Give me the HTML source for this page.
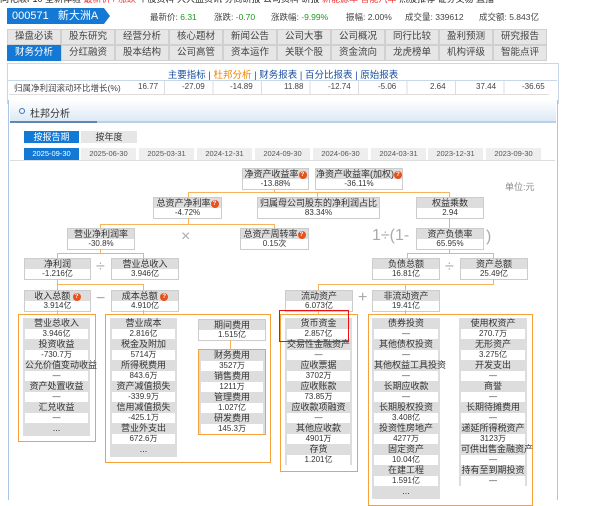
<!DOCTYPE html>
<html><head><meta charset="utf-8"><style>
body{margin:0;width:616px;height:500px;overflow:hidden;background:#fff;font-family:"Liberation Sans","Noto Sans CJK SC",sans-serif;font-size:9px;color:#333;position:relative}
.a{position:absolute}
.nav{position:absolute;height:14px;line-height:14px;width:52px;background:#e6e6e6;border:1px solid #d0d0d0;text-align:center;font-size:9.5px;color:#444}
.nav.on{background:#1479d4;color:#fff;border-color:#1479d4}
.dt{position:absolute;top:148px;height:12px;line-height:12px;width:55px;background:#eee;text-align:center;font-size:7.5px;color:#555}
.n{position:absolute;border:1px solid #ccc;background:#fff;text-align:center;font-size:9px;height:20px}
.n b{display:block;background:#ddd;height:10px;line-height:10px;font-weight:normal;color:#333}
.n i{display:block;height:10px;line-height:10px;font-style:normal;color:#333;font-size:8px}
.q{display:inline-block;width:8px;height:8px;border-radius:50%;background:#e8501c;color:#fff;font-size:6px;line-height:8px;text-align:center;vertical-align:middle;font-weight:bold}
.ob{position:absolute;border:1px solid #f7a13a}
.ol{position:absolute;background:#f7b25a}
.col{position:absolute;background:#ddd;padding:0 2px}
.col div{height:10.5px;line-height:10.5px;text-align:center;font-size:9px;white-space:nowrap}
.col div.v{background:#fff;font-size:8px}
.op{position:absolute;color:#aaa;font-size:16px}
</style></head><body>
<div class="a" style="top:-8px;left:0;white-space:nowrap;font-size:9px;color:#222">同花顺F10 全新体验 <span style="color:#e33">最新价 / 涨跌</span> 个股资料 大大盘资讯 券商研报 公司资料 研报 <span style="color:#e33">新能源车 智能汽车</span> 热股推荐 证券交易 直播</div>
<div class="a" style="left:7px;top:8px;width:97px;height:16px;background:#1479d4;color:#fff;line-height:16px;font-size:11px;padding-left:5px;box-sizing:border-box">000571&nbsp;&nbsp; 新大洲A</div>
<div class="a" style="left:104px;top:8px;width:0;height:0;border-top:8px solid transparent;border-bottom:8px solid transparent;border-left:6px solid #1479d4"></div>
<div class="a" style="top:11px;left:150px;font-size:8.5px;color:#444;white-space:nowrap">最新价: <span style="color:#1a9a1a">6.31</span></div>
<div class="a" style="top:11px;left:214px;font-size:8.5px;color:#444;white-space:nowrap">涨跌: <span style="color:#1a9a1a">-0.70</span></div>
<div class="a" style="top:11px;left:271px;font-size:8.5px;color:#444;white-space:nowrap">涨跌幅: <span style="color:#1a9a1a">-9.99%</span></div>
<div class="a" style="top:11px;left:346px;font-size:8.5px;color:#444;white-space:nowrap">振幅: 2.00%</div>
<div class="a" style="top:11px;left:405px;font-size:8.5px;color:#444;white-space:nowrap">成交量: 339612</div>
<div class="a" style="top:11px;left:479px;font-size:8.5px;color:#444;white-space:nowrap">成交额: 5.843亿</div>

<div class="nav" style="left:7px;top:29px">操盘必读</div><div class="nav" style="left:61px;top:29px">股东研究</div><div class="nav" style="left:115px;top:29px">经营分析</div><div class="nav" style="left:169px;top:29px">核心题材</div><div class="nav" style="left:223px;top:29px">新闻公告</div><div class="nav" style="left:277px;top:29px">公司大事</div><div class="nav" style="left:331px;top:29px">公司概况</div><div class="nav" style="left:385px;top:29px">同行比较</div><div class="nav" style="left:439px;top:29px">盈利预测</div><div class="nav" style="left:493px;top:29px">研究报告</div>
<div class="nav on" style="left:7px;top:45px">财务分析</div><div class="nav" style="left:61px;top:45px">分红融资</div><div class="nav" style="left:115px;top:45px">股本结构</div><div class="nav" style="left:169px;top:45px">公司高管</div><div class="nav" style="left:223px;top:45px">资本运作</div><div class="nav" style="left:277px;top:45px">关联个股</div><div class="nav" style="left:331px;top:45px">资金流向</div><div class="nav" style="left:385px;top:45px">龙虎榜单</div><div class="nav" style="left:439px;top:45px">机构评级</div><div class="nav" style="left:493px;top:45px">智能点评</div>

<div class="a" style="left:7px;top:63px;width:550px;height:40px;border:1px solid #c8d8e8;border-bottom:none"></div>
<div class="a" style="top:67px;left:0;width:566px;text-align:center;font-size:9.5px;color:#1a4fa0">主要指标 | <span style="color:#f08300">杜邦分析</span> | 财务报表 | 百分比报表 | 原始报表</div>
<div class="a" style="left:8px;top:80px;width:549px;height:1px;background:#c8d8e8"></div>
<div class="a" style="left:9px;top:81px;width:540px;height:13px;border-bottom:1px solid #ddd"></div>
<div class="a" style="top:82px;left:14px;font-size:8.5px;color:#444">归属净利润滚动环比增长(%)</div>
<div class="a" style="top:82px;left:120px;width:440px;font-size:8px;color:#444">
<span class="a" style="left:18px">16.77</span><span class="a" style="left:62px">-27.09</span><span class="a" style="left:110px">-14.89</span><span class="a" style="left:164px">11.88</span><span class="a" style="left:208px">-12.74</span><span class="a" style="left:258px">-5.06</span><span class="a" style="left:310px">2.64</span><span class="a" style="left:356px">37.44</span><span class="a" style="left:402px">-36.65</span></div>
<div class="a" style="left:164px;top:81px;width:385px;height:13px;background:repeating-linear-gradient(90deg,#ddd 0 1px,transparent 1px 48.5px)"></div>

<div class="a" style="left:8px;top:100px;width:548px;height:400px;border-left:1px solid #a9c6e4;border-right:1px solid #a9c6e4"></div>
<div class="a" style="left:10px;top:100px;width:546px;height:21px;background:linear-gradient(#fff,#dde9f5)"></div>
<div class="a" style="left:10px;top:121px;width:546px;height:2px;background:#b8d0e8"></div>
<div class="a" style="left:10px;top:121px;width:87px;height:2px;background:#5f87b0"></div>
<div class="a" style="left:19px;top:108px;width:4px;height:4px;border:1.5px solid #3b74b0;border-radius:50%"></div>
<div class="a" style="left:30px;top:105px;font-size:10px;color:#333">杜邦分析</div>
<div class="a" style="left:24px;top:131px;width:55px;height:12px;line-height:12px;background:#1479d4;color:#fff;text-align:center;font-size:9px">按报告期</div>
<div class="a" style="left:81px;top:131px;width:56px;height:12px;line-height:12px;background:#e6e6e6;text-align:center;font-size:9px">按年度</div>
<div class="dt" style="left:24px;background:#1479d4;color:#fff">2025-09-30</div><div class="dt" style="left:81px">2025-06-30</div><div class="dt" style="left:139px">2025-03-31</div><div class="dt" style="left:197px">2024-12-31</div><div class="dt" style="left:255px">2024-09-30</div><div class="dt" style="left:313px">2024-06-30</div><div class="dt" style="left:371px">2024-03-31</div><div class="dt" style="left:428px">2023-12-31</div><div class="dt" style="left:486px">2023-09-30</div>
<div class="a" style="left:10px;top:160px;width:545px;height:340px;border-top:1px solid #ddd"></div>

<div class="n" style="left:242px;top:168px;width:65px"><b>净资产收益率<span class="q">?</span></b><i>-13.88%</i></div>
<div class="n" style="left:315px;top:168px;width:86px"><b>净资产收益率(加权)<span class="q">?</span></b><i>-36.11%</i></div>
<div class="a" style="left:505px;top:180px;color:#888;font-size:9px">单位:元</div>
<div class="ol" style="left:274px;top:189px;width:1px;height:3px"></div>
<div class="ol" style="left:188px;top:192px;width:262px;height:1px"></div>
<div class="ol" style="left:188px;top:192px;width:1px;height:5px"></div><div class="ol" style="left:317px;top:192px;width:1px;height:5px"></div><div class="ol" style="left:449px;top:192px;width:1px;height:5px"></div>
<div class="n" style="left:153px;top:197px;width:67px"><b>总资产净利率<span class="q">?</span></b><i>-4.72%</i></div>
<div class="n" style="left:257px;top:197px;width:121px"><b>归属母公司股东的净利润占比</b><i>83.34%</i></div>
<div class="n" style="left:416px;top:197px;width:66px"><b>权益乘数</b><i>2.94</i></div>
<div class="ol" style="left:188px;top:218px;width:1px;height:6px"></div>
<div class="ol" style="left:100px;top:224px;width:174px;height:1px"></div>
<div class="ol" style="left:100px;top:224px;width:1px;height:4px"></div><div class="ol" style="left:274px;top:224px;width:1px;height:4px"></div>
<div class="ol" style="left:449px;top:218px;width:1px;height:10px"></div>
<div class="n" style="left:67px;top:228px;width:66px"><b>营业净利润率</b><i>-30.8%</i></div>
<div class="op" style="left:181px;top:228px">×</div>
<div class="n" style="left:240px;top:228px;width:67px"><b>总资产周转率<span class="q">?</span></b><i>0.15次</i></div>
<div class="op" style="left:372px;top:227px;font-size:16px">1÷(1-</div>
<div class="n" style="left:416px;top:228px;width:66px"><b>资产负债率</b><i>65.95%</i></div>
<div class="op" style="left:486px;top:228px;font-size:16px">)</div>
<div class="ol" style="left:100px;top:249px;width:1px;height:4px"></div>
<div class="ol" style="left:57px;top:253px;width:86px;height:1px"></div>
<div class="ol" style="left:57px;top:253px;width:1px;height:5px"></div><div class="ol" style="left:143px;top:253px;width:1px;height:5px"></div>
<div class="ol" style="left:449px;top:249px;width:1px;height:4px"></div>
<div class="ol" style="left:407px;top:253px;width:86px;height:1px"></div>
<div class="ol" style="left:407px;top:253px;width:1px;height:5px"></div><div class="ol" style="left:493px;top:253px;width:1px;height:5px"></div>
<div class="n" style="left:24px;top:258px;width:65px"><b>净利润</b><i>-1.216亿</i></div>
<div class="op" style="left:96px;top:258px">÷</div>
<div class="n" style="left:111px;top:258px;width:66px"><b>营业总收入</b><i>3.946亿</i></div>
<div class="n" style="left:372px;top:258px;width:66px"><b>负债总额</b><i>16.81亿</i></div>
<div class="op" style="left:445px;top:258px">÷</div>
<div class="n" style="left:460px;top:258px;width:66px"><b>资产总额</b><i>25.49亿</i></div>
<div class="ol" style="left:57px;top:279px;width:1px;height:5px"></div>
<div class="ol" style="left:57px;top:284px;width:86px;height:1px"></div>
<div class="ol" style="left:57px;top:284px;width:1px;height:6px"></div><div class="ol" style="left:143px;top:284px;width:1px;height:6px"></div>
<div class="ol" style="left:493px;top:279px;width:1px;height:5px"></div>
<div class="ol" style="left:318px;top:284px;width:176px;height:1px"></div>
<div class="ol" style="left:318px;top:284px;width:1px;height:6px"></div><div class="ol" style="left:405px;top:284px;width:1px;height:6px"></div>
<div class="n" style="left:24px;top:290px;width:65px"><b>收入总额 <span class="q">?</span></b><i>3.914亿</i></div>
<div class="op" style="left:96px;top:290px">−</div>
<div class="n" style="left:111px;top:290px;width:66px"><b>成本总额 <span class="q">?</span></b><i>4.910亿</i></div>
<div class="n" style="left:285px;top:290px;width:66px"><b>流动资产</b><i>6.073亿</i></div>
<div class="op" style="left:358px;top:289px">+</div>
<div class="n" style="left:372px;top:290px;width:66px"><b>非流动资产</b><i>19.41亿</i></div>
<div class="ol" style="left:57px;top:310px;width:1px;height:4px"></div><div class="ol" style="left:143px;top:310px;width:1px;height:4px"></div>
<div class="ol" style="left:318px;top:310px;width:1px;height:4px"></div><div class="ol" style="left:405px;top:310px;width:1px;height:4px"></div>

<div class="ob" style="left:18px;top:314px;width:76px;height:126px"></div>
<div class="col" style="left:23px;top:318px;width:63px"><div>营业总收入</div><div class="v">3.946亿</div><div>投资收益</div><div class="v">-730.7万</div><div>公允价值变动收益</div><div class="v">—</div><div>资产处置收益</div><div class="v">—</div><div>汇兑收益</div><div class="v">—</div><div style="height:13px">...</div></div>

<div class="ob" style="left:105px;top:314px;width:164px;height:147px"></div>
<div class="col" style="left:110px;top:318px;width:63px"><div>营业成本</div><div class="v">2.816亿</div><div>税金及附加</div><div class="v">5714万</div><div>所得税费用</div><div class="v">843.6万</div><div>资产减值损失</div><div class="v">-339.9万</div><div>信用减值损失</div><div class="v">-425.1万</div><div>营业外支出</div><div class="v">672.6万</div><div style="height:13px">...</div></div>
<div class="n" style="left:198px;top:319px;width:66px"><b>期间费用</b><i>1.515亿</i></div>
<div class="ol" style="left:230px;top:340px;width:1px;height:9px"></div>
<div class="ob" style="left:198px;top:349px;width:66px;height:84px"></div>
<div class="col" style="left:199px;top:350px;width:62px"><div>财务费用</div><div class="v">3527万</div><div>销售费用</div><div class="v">1211万</div><div>管理费用</div><div class="v">1.027亿</div><div>研发费用</div><div class="v">145.3万</div></div>

<div class="ob" style="left:280px;top:314px;width:76px;height:156px"></div>
<div class="col" style="left:285px;top:318px;width:63px"><div>货币资金</div><div class="v">2.857亿</div><div>交易性金融资产</div><div class="v">—</div><div>应收票据</div><div class="v">3702万</div><div>应收账款</div><div class="v">73.85万</div><div>应收款项融资</div><div class="v">—</div><div>其他应收款</div><div class="v">4901万</div><div>存货</div><div class="v">1.201亿</div></div>
<div class="a" style="left:279px;top:310px;width:68px;height:30px;border:1.5px solid #e81010"></div>

<div class="ob" style="left:368px;top:314px;width:163px;height:190px"></div>
<div class="col" style="left:372px;top:318px;width:64px"><div>债券投资</div><div class="v">—</div><div>其他债权投资</div><div class="v">—</div><div>其他权益工具投资</div><div class="v">—</div><div>长期应收款</div><div class="v">—</div><div>长期股权投资</div><div class="v">3.408亿</div><div>投资性房地产</div><div class="v">4277万</div><div>固定资产</div><div class="v">10.04亿</div><div>在建工程</div><div class="v">1.591亿</div><div style="height:13px">...</div></div>
<div class="col" style="left:459px;top:318px;width:64px"><div>使用权资产</div><div class="v">270.7万</div><div>无形资产</div><div class="v">3.275亿</div><div>开发支出</div><div class="v">—</div><div>商誉</div><div class="v">—</div><div>长期待摊费用</div><div class="v">—</div><div>递延所得税资产</div><div class="v">3123万</div><div>可供出售金融资产</div><div class="v">—</div><div>持有至到期投资</div><div class="v">—</div></div>
</body></html>
